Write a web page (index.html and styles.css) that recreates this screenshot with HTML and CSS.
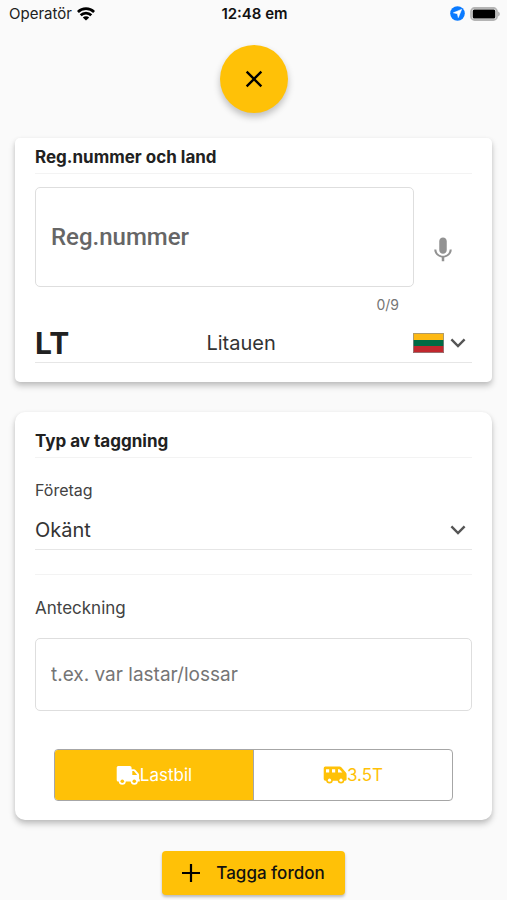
FILE: index.html
```html
<!DOCTYPE html>
<html lang="sv">
<head>
<meta charset="utf-8">
<meta name="viewport" content="width=device-width, initial-scale=1">
<title>Tagga fordon</title>
<link rel="stylesheet" href="styles.css">
</head>
<body>
<header class="status">
  <div class="status-left">
    <span>Operatör</span>
    <svg width="18" height="14" viewBox="0 0 18 14" aria-hidden="true">
      <g fill="none" stroke="#000" stroke-width="2.7">
        <path d="M.9 5a11.5 11.500 0 0 1 16.200 0"/>
        <path d="M3.700 8.300a7.500 7.500 0 0 1 10.600 0"/>
      </g>
      <path d="M9 13.600 5.800 10.500a4.600 4.600 0 0 1 6.400 0z"/>
    </svg>
  </div>
  <span class="status-time">12:48 em</span>
  <div class="status-right">
    <svg width="15" height="15" viewBox="0 0 15 15" aria-hidden="true">
      <circle cx="7.5" cy="7.5" r="7.3" fill="#0a7aff"/>
      <path d="M11.6 3.4 8.3 11.6 7.4 7.7 3.4 6.8z" fill="#fff" stroke="#fff" stroke-width=".6" stroke-linejoin="round"/>
    </svg>
    <svg width="30" height="14" viewBox="0 0 30 14" aria-hidden="true">
      <rect x="1" y="1" width="26" height="12" rx="3.6" fill="#fafafa" stroke="#b4b4b4" stroke-width="1.8"/>
      <rect x="2.7" y="2.4" width="22.6" height="9.200" rx="1.6"/>
      <path d="M28.2 4.6q1.6.8 1.6 2.4t-1.6 2.4z" fill="#aaa"/>
    </svg>
  </div>
</header>
<main class="page">
  <button class="close" type="button" aria-label="Stäng">
    <svg width="28" height="28" viewBox="0 0 24 24" aria-hidden="true"><path d="M19 6.41 17.59 5 12 10.59 6.41 5 5 6.41 10.59 12 5 17.59 6.41 19 12 13.41 17.59 19 19 17.59 13.41 12z"/></svg>
  </button>

  <section class="card card-reg">
    <h2 class="card-title">Reg.nummer och land</h2>
    <div class="reg-row">
      <input class="field field-reg" type="text" maxlength="9" placeholder="Reg.nummer" aria-label="Reg.nummer">
      <button class="mic" type="button" aria-label="Diktera">
        <svg width="30" height="30" viewBox="0 0 24 24" fill="#929292" aria-hidden="true"><path d="M12 15c1.66 0 2.99-1.34 2.99-3L15 5c0-1.66-1.34-3-3-3S9 3.34 9 5v7c0 1.66 1.34 3 3 3zm5.300-3.500c0 3-2.540 5.100-5.300 5.100s-5.300-2.100-5.300-5.100H5c0 3.410 2.720 6 6 6.500V21h2v-3c3.280-.5 6-3.090 6-6.500z"/></svg>
      </button>
      <span class="counter">0/9</span>
    </div>
    <div class="picker">
      <span class="code">LT</span>
      <select class="select select-country" aria-label="Land"><option>Litauen</option></select>
      <svg class="flag" width="31" height="20" viewBox="0 0 31 20" aria-hidden="true">
        <path fill="#fdb913" d="M0 0h31v7H0z"/><path fill="#006a44" d="M0 7h31v6H0z"/><path fill="#c1272d" d="M0 13h31v7H0z"/>
        <path d="M.5.5h30v19H.5z" fill="none" stroke="#8d8d8d" stroke-opacity=".7"/>
      </svg>
      <svg class="chevron" width="16" height="10" viewBox="0 0 16 10" aria-hidden="true"><path d="M1.4 1.4 8 8l6.600-6.600"/></svg>
    </div>
  </section>

  <section class="card card-type">
    <h2 class="card-title">Typ av taggning</h2>
    <label class="label label-company" for="company">Företag</label>
    <div class="picker">
      <select class="select" id="company"><option>Okänt</option></select>
      <svg class="chevron" width="16" height="10" viewBox="0 0 16 10" aria-hidden="true"><path d="M1.4 1.4 8 8l6.600-6.600"/></svg>
    </div>
    <hr class="rule">
    <label class="label label-note" for="note">Anteckning</label>
    <input class="field field-note" id="note" type="text" placeholder="t.ex. var lastar/lossar">
    <div class="toggle" role="radiogroup" aria-label="Fordonstyp">
      <label class="option">
        <input type="radio" name="vehicle" checked>
        <svg width="24" height="20" viewBox="0 0 24 20" fill="currentColor" aria-hidden="true">
          <path fill-rule="evenodd" d="M2.200 1h11.600A1.800 1.800 0 0 1 15.600 2.800V4.300h2.300c.6 0 1.200.3 1.600.7l3 3.400c.4.4.6.9.6 1.500v4.300h.7v2.200H2.200A1.500 1.500 0 0 1 .7 14.900V2.500A1.500 1.500 0 0 1 2.200 1zM16.300 6v4h4.900L17.900 6z"/>
          <circle cx="6.300" cy="16.200" r="3.500"/><circle cx="18.300" cy="16.200" r="3.500"/>
          <circle class="hub" cx="6.300" cy="16.200" r="1.800"/><circle class="hub" cx="18.300" cy="16.200" r="1.800"/>
        </svg>
        <span>Lastbil</span>
      </label>
      <label class="option">
        <input type="radio" name="vehicle">
        <svg width="24" height="20" viewBox="0 0 24 20" fill="currentColor" aria-hidden="true">
          <path fill-rule="evenodd" d="M2.400 1.500h14.200c.7 0 1.300.3 1.700.8l4.400 5c.6.6.9 1.300.9 2.100v4.900c0 .8-.6 1.400-1.400 1.400H2.400A1.700 1.700 0 0 1 .7 14V3.200A1.700 1.700 0 0 1 2.400 1.500zM3 4.200v3.400h3.200V4.200zM9 4.200v3.400h3.200V4.200zM15 4.200v3.400h4.400l-3-3.400z"/>
          <circle cx="6.500" cy="15.200" r="3.300"/><circle cx="18" cy="15.200" r="3.300"/>
          <circle class="hub" cx="6.500" cy="15.200" r="1.600"/><circle class="hub" cx="18" cy="15.200" r="1.600"/>
        </svg>
        <span>3.5T</span>
      </label>
    </div>
  </section>

  <button class="submit" type="button">
    <svg width="18" height="18" viewBox="0 0 18 18" aria-hidden="true"><path d="M7.900 0h2.200v7.900H18v2.200h-7.900V18H7.900v-7.900H0V7.900h7.900z"/></svg>
    <span>Tagga fordon</span>
  </button>
</main>
</body>
</html>
```
FILE: styles.css
```css
* {
  box-sizing: border-box;
}

body {
  margin: 0;
  background: #fafafa;
  color: #212121;
  font-family: Inter, "Liberation Sans", sans-serif;
}

button,
input,
select {
  margin: 0;
  font: inherit;
  color: inherit;
}

svg {
  display: block;
  flex: none;
}

.status {
  display: grid;
  grid-template-columns: 1fr auto 1fr;
  align-items: center;
  height: 27px;
  padding: 0 7px 0 9px;
  font-size: 15px;
}

.status-left,
.status-right {
  display: flex;
  align-items: center;
  gap: 5px;
}

.status-right {
  justify-content: flex-end;
}

.status-time {
  font-weight: 600;
  color: #111;
}

.page {
  display: flex;
  flex-direction: column;
  align-items: center;
  padding: 18px 15px 5px;
}

.close {
  display: grid;
  place-items: center;
  width: 68px;
  height: 68px;
  padding: 0;
  border: 0;
  border-radius: 50%;
  background: #ffc107;
  box-shadow: 0 4px 7px rgba(0, 0, 0, 0.24);
}

.card {
  display: flex;
  flex-direction: column;
  width: 100%;
  padding: 0 20px;
  background: #fff;
  box-shadow: 0 4px 6px rgba(0, 0, 0, 0.22), 0 1px 4px rgba(0, 0, 0, 0.06);
}

.card-reg {
  margin-top: 25px;
  padding-top: 7px;
  padding-bottom: 19px;
  border-radius: 5px;
}

.card-type {
  margin-top: 30px;
  padding-top: 17px;
  padding-bottom: 19px;
  border-radius: 10px;
}

.card-title {
  margin: 0;
  padding-bottom: 4px;
  border-bottom: 1px solid #f3f3f3;
  font-size: 17px;
  line-height: 24px;
  font-weight: 700;
}

.field {
  width: 100%;
  min-width: 0;
  padding: 0 15px;
  border: 1px solid #dedede;
  border-radius: 5px;
  background: #fff;
}

.field::placeholder {
  color: #757575;
  opacity: 1;
}

.reg-row {
  display: grid;
  grid-template-columns: 1fr 58px;
  margin-top: 13px;
}

.field-reg {
  height: 100px;
  font-family: Roboto, sans-serif;
  font-size: 24px;
  font-weight: 500;
}

.field-reg::placeholder {
  color: #666;
}

.mic {
  display: flex;
  justify-content: center;
  align-items: flex-end;
  padding: 0 0 22px;
  border: 0;
  background: none;
}

.counter {
  padding: 8px 15px 0 0;
  font-size: 14px;
  line-height: 20px;
  text-align: right;
  color: #757575;
}

.picker {
  display: flex;
  align-items: center;
  height: 40px;
  padding-right: 6px;
  border-bottom: 1px solid #e6e6e6;
}

.card-reg .picker {
  margin-top: 8px;
}

.code {
  font-size: 30px;
  font-weight: 700;
}

.select {
  flex: 1;
  min-width: 0;
  height: 100%;
  padding: 0;
  border: 0;
  appearance: none;
  background: none;
  font-size: 20px;
  color: #333;
}

.select-country {
  text-align: center;
  text-align-last: center;
}

.chevron {
  margin-left: 6px;
  fill: none;
  stroke: #555;
  stroke-width: 2.4;
}

.label {
  font-size: 16px;
  line-height: 24px;
  color: #424242;
}

.label-company {
  margin-top: 20px;
  margin-bottom: 8px;
}

.rule {
  width: 100%;
  margin: 24px 0 0;
  border: 0;
  border-top: 1px solid #f3f3f3;
}

.label-note {
  margin-top: 21px;
  font-size: 17px;
}

.field-note {
  height: 73px;
  margin-top: 18px;
  font-size: 19px;
}

.toggle {
  display: flex;
  margin: 38px 19px 0;
  overflow: hidden;
  border: 1px solid #a6a6a6;
  border-radius: 4px;
}

.option {
  position: relative;
  display: flex;
  flex: 1;
  justify-content: center;
  align-items: center;
  height: 50px;
  color: #ffc107;
  font-size: 17px;
}

.option + .option {
  border-left: 1px solid #a6a6a6;
}

.option input {
  position: absolute;
  inset: 0;
  width: 100%;
  height: 100%;
  opacity: 0;
}

.hub {
  fill: #fff;
}

.option:has(input:checked) {
  background: #ffc107;
  color: #fff;
}

.option:has(input:checked) .hub {
  fill: #ffc107;
}

.submit {
  display: flex;
  align-items: center;
  gap: 16px;
  height: 44px;
  margin-top: 31px;
  padding: 0 20px;
  border: 0;
  border-radius: 4px;
  background: #ffc107;
  box-shadow: 0 2px 3px rgba(0, 0, 0, 0.26);
  color: #111;
  font-size: 17px;
  font-weight: 500;
}
```
